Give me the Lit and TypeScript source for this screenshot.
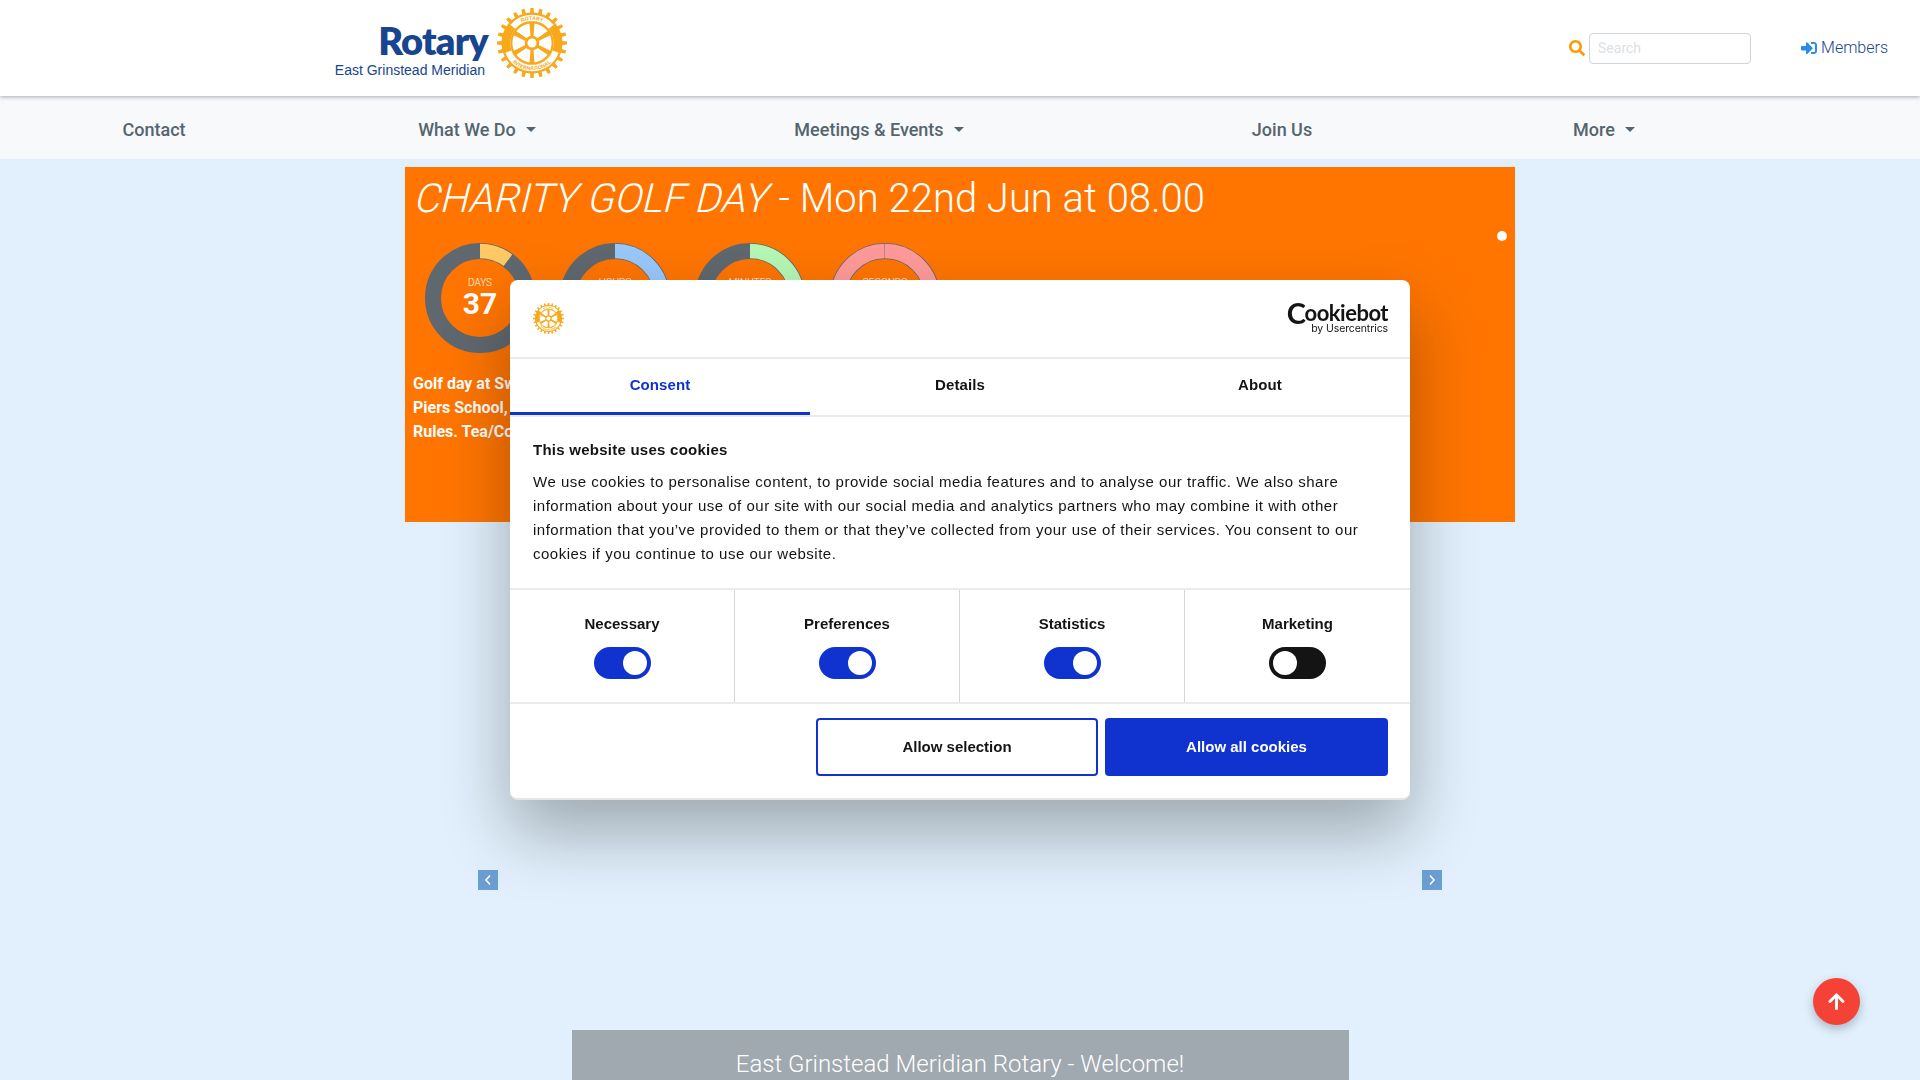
import { LitElement, html, css, svg } from "lit";
import { customElement } from "lit/decorators.js";

const GOLD = "#f7a81b";

function arcPath(r: number, fromDeg: number, toDeg: number, sweep: number) {
  const p = (d: number) => {
    const a = ((d - 90) * Math.PI) / 180;
    return `${(r * Math.cos(a)).toFixed(2)} ${(r * Math.sin(a)).toFixed(2)}`;
  };
  return `M ${p(fromDeg)} A ${r} ${r} 0 ${Math.abs(toDeg - fromDeg) > 180 ? 1 : 0} ${sweep} ${p(toDeg)}`;
}

function gearPoints() {
  const pts: string[] = [];
  const n = 24;
  for (let i = 0; i < n; i++) {
    const step = 360 / n;
    const base = i * step;
    const seq: [number, number][] = [
      [base - step * 0.5, 43.5],
      [base - step * 0.24, 43.5],
      [base - step * 0.17, 50],
      [base + step * 0.17, 50],
      [base + step * 0.24, 43.5],
    ];
    for (const [d, r] of seq) {
      const a = (d * Math.PI) / 180;
      pts.push(`${(r * Math.cos(a)).toFixed(2)},${(r * Math.sin(a)).toFixed(2)}`);
    }
  }
  return pts.join(" ");
}

function wheel(size: number, id: string) {
  const spokes = [0, 60, 120, 180, 240, 300];
  return html`<svg class="wheel" width=${size} height=${size} viewBox="-50 -50 100 100">
    <polygon points=${gearPoints()} fill=${GOLD}></polygon>
    <path d=${arcPath(36, -50, 50, 1)} fill="none" stroke="#fff" stroke-width="9"></path>
    <path d=${arcPath(36, 110, 250, 1)} fill="none" stroke="#fff" stroke-width="9"></path>
    <circle r="31" fill="#fff"></circle>
    <circle r="29.5" fill="none" stroke=${GOLD} stroke-width="3"></circle>
    ${spokes.map(
      (d) => svg`<polygon points="-2,-8 2,-8 3.6,-29 -3.6,-29" fill=${GOLD} transform="rotate(${d})"></polygon>`
    )}
    <circle r="10.5" fill=${GOLD}></circle>
    <circle r="6.5" fill="#fff"></circle>
    <path id="${id}-top" d=${arcPath(33.2, -50, 50, 1)} fill="none"></path>
    <path id="${id}-bot" d=${arcPath(39, 250, 110, 0)} fill="none"></path>
    <text class="wheel-text" fill=${GOLD} text-anchor="middle">
      <textPath href="#${id}-top" startOffset="50%">ROTARY</textPath>
    </text>
    <text class="wheel-text" fill=${GOLD} text-anchor="middle">
      <textPath href="#${id}-bot" startOffset="50%">INTERNATIONAL</textPath>
    </text>
  </svg>`;
}

const RINGS = [
  { label: "DAYS", value: "37", color: "#ffc966", frac: 37 / 365 },
  { label: "HOURS", value: "", color: "#99c8fb", frac: 0.36 },
  { label: "MINUTES", value: "", color: "#b5f7b5", frac: 0.36 },
  { label: "SECONDS", value: "", color: "#ff9a9a", frac: 0.997 },
];

const NAV = [
  { label: "Contact", caret: false },
  { label: "What We Do", caret: true },
  { label: "Meetings & Events", caret: true },
  { label: "Join Us", caret: false },
  { label: "More", caret: true },
];

const TOGGLES = [
  { label: "Necessary", on: true },
  { label: "Preferences", on: true },
  { label: "Statistics", on: true },
  { label: "Marketing", on: false },
];

@customElement("app-root")
export class AppRoot extends LitElement {
  static styles = css`
    :host {
      display: block;
      height: 1080px;
      overflow: hidden;
      background: #e1f0fc;
      font-family: Roboto, sans-serif;
      position: relative;
    }
    * { box-sizing: border-box; }
    .wheel-text { font: 700 7.5px "Liberation Sans", sans-serif; }
    .header {
      height: 96px;
      background: #fff;
      display: flex;
      align-items: flex-start;
      padding: 0 32px 0 335px;
      box-shadow: 0 1px 4px rgba(60, 80, 100, 0.45);
      position: relative;
    }
    .logo { display: flex; align-items: flex-start; gap: 9px; padding-top: 8px; }
    .logo-text { display: flex; flex-direction: column; align-items: flex-end; width: 153px; }
    .logo-rotary {
      font: 800 38px/44px Lato, sans-serif;
      letter-spacing: -0.8px;
      color: #17458f;
      margin-top: 10px;
    }
    .logo-sub {
      font: 14px/16px "Liberation Sans", sans-serif;
      color: #17458f;
      white-space: nowrap;
      padding-right: 3px;
    }
    .tools { margin-left: auto; display: flex; align-items: center; height: 96px; }
    .search-icon { width: 16px; height: 16px; fill: #ff9900; margin-right: 4px; display: block; }
    .search {
      width: 162px;
      height: 31px;
      border: 1px solid #ced4da;
      border-radius: 4px;
      padding: 0 8px;
      font: 14px Roboto, sans-serif;
      color: #dcdfe3;
      display: flex;
      align-items: center;
    }
    .members {
      margin-left: 50px;
      display: flex;
      align-items: center;
      gap: 4px;
      font: 300 16px Roboto, sans-serif;
      color: #17458f;
      margin-top: -1px;
    }
    .members svg { width: 16px; height: 16px; fill: #2a8ee8; display: block; }
    .nav {
      height: 63px;
      background: #f8f9fa;
      display: grid;
      grid-template-columns: 308px 338px 466px 340px 304px;
      align-items: center;
      padding-top: 4px;
    }
    .nav-item {
      text-align: center;
      font: 500 18px Roboto, sans-serif;
      color: #54656f;
      white-space: nowrap;
    }
    .caret {
      display: inline-block;
      margin-left: 10px;
      vertical-align: 4px;
      border-top: 5px solid #54656f;
      border-left: 5px solid transparent;
      border-right: 5px solid transparent;
    }
    .carousel {
      position: relative;
      height: 863px;
      margin-top: 8px;
    }
    .banner {
      width: 1110px;
      height: 355px;
      margin: 0 auto;
      background: #ff7500;
      color: #fff;
      position: relative;
      overflow: hidden;
    }
    .title {
      font: 300 40px/48px Roboto, sans-serif;
      padding: 8px 0 0 10px;
      white-space: nowrap;
    }
    .slant {
      display: inline-block;
      font-weight: 300;
      transform: skewX(-14deg);
      transform-origin: 0 60%;
    }
    .rings { display: flex; gap: 25px; padding: 20px 0 0 20px; }
    .ring { width: 110px; height: 110px; display: grid; place-items: center; }
    .ring > * { grid-area: 1 / 1; }
    .ring-svg { display: block; }
    .ring-text { display: flex; flex-direction: column; align-items: center; margin-top: 1px; }
    .ring-label { font: 300 10px/12px Roboto, sans-serif; }
    .ring-value { font: 700 30px/30px Roboto, sans-serif; min-height: 32px; }
    .desc {
      font: 700 16px/24px Roboto, sans-serif;
      padding: 19px 0 0 8px;
    }
    .dot {
      position: absolute;
      top: 64px;
      left: 1092px;
      width: 10px;
      height: 10px;
      border-radius: 50%;
      background: #fff;
    }
    .arrow {
      position: absolute;
      top: 703px;
      width: 20px;
      height: 20px;
      background: #6b9fd4;
      display: flex;
      align-items: center;
      justify-content: center;
    }
    .arrow svg { width: 8px; height: 12px; display: block; }
    .arrow.prev { left: 478px; }
    .arrow.next { left: 1422px; }
    .welcome {
      width: 777px;
      margin: 0 auto;
      background: #9fa9af;
      color: #fff;
      text-align: center;
      font: 300 24px/28px Roboto, sans-serif;
      padding: 20px 0 20px;
    }
    .fab {
      position: fixed;
      left: 1813px;
      top: 978px;
      width: 47px;
      height: 47px;
      border-radius: 50%;
      background: #f44336;
      box-shadow: 0 4px 10px rgba(60, 80, 100, 0.35);
      display: flex;
      align-items: center;
      justify-content: center;
    }
    .fab svg { width: 17px; height: 19px; fill: #fff; display: block; }

    .dialog {
      position: fixed;
      left: 510px;
      top: 280px;
      width: 900px;
      height: 520px;
      background: #fff;
      border-radius: 8px;
      border-bottom: 2px solid #e6e6e6;
      box-shadow: 0 32px 68px rgba(0, 0, 0, 0.3);
      font-family: "Liberation Sans", Arial, sans-serif;
      color: #141414;
      display: flex;
      flex-direction: column;
      overflow: hidden;
    }
    .d-head {
      height: 79px;
      flex: none;
      border-bottom: 2px solid #ebebeb;
      display: flex;
      align-items: center;
      justify-content: space-between;
      padding: 0 22px 0 23px;
    }
    .d-logo { display: block; margin-top: 4px; }
    .cb { display: flex; flex-direction: column; align-items: flex-end; color: #141414; margin-bottom: 1px; }
    .cb-name {
      font: 700 22px/21px Lato, sans-serif;
      letter-spacing: -0.5px;
      display: flex;
      align-items: center;
    }
    .cb-c { font-size: 29px; font-weight: 700; line-height: 21px; margin-right: -1px; }
    .cb-by {
      font: 400 10.5px/12px Inter, sans-serif;
      letter-spacing: -0.1px;
    }
    .tabs { display: grid; grid-template-columns: repeat(3, 1fr); border-bottom: 2px solid #ebebeb; flex: none; height: 58px; }
    .tab {
      display: flex;
      align-items: center;
      justify-content: center;
      font-weight: 700;
      font-size: 15px;
      letter-spacing: 0.1px;
      border-bottom: 3px solid transparent;
      padding-bottom: 2px;
    }
    .tab.active { color: #1032cf; border-bottom-color: #1032cf; }
    .body {
      height: 173px;
      flex: none;
      padding: 21px 23px 0;
      border-bottom: 2px solid #ebebeb;
      font-size: 15px;
      line-height: 24px;
      letter-spacing: 0.5px;
    }
    .body h2 { font-size: 15px; line-height: 24px; margin: 0 0 8px; font-weight: 700; letter-spacing: 0.25px; }
    .body p { margin: 0; }
    .toggles { display: grid; grid-template-columns: repeat(4, 1fr); height: 114px; flex: none; border-bottom: 2px solid #ebebeb; }
    .tg {
      display: flex;
      flex-direction: column;
      align-items: center;
      padding-top: 23px;
      gap: 12px;
      font-weight: 700;
      font-size: 15px;
      line-height: 22px;
      border-right: 1px solid #d6d6d6;
    }
    .tg:last-child { border-right: none; }
    .switch {
      width: 57px;
      height: 32px;
      border-radius: 16px;
      background: #141414;
      padding: 4px;
      display: flex;
      justify-content: flex-start;
    }
    .switch.on { background: #1032cf; justify-content: flex-end; }
    .knob { width: 24px; height: 24px; border-radius: 50%; background: #fff; }
    .actions {
      flex: 1;
      display: flex;
      justify-content: flex-end;
      gap: 7px;
      padding: 14px 22px 0;
    }
    .btn {
      height: 58px;
      border: 2px solid #1032cf;
      border-radius: 4px;
      font-weight: 700;
      font-size: 15px;
      padding-bottom: 2px;
      display: flex;
      align-items: center;
      justify-content: center;
    }
    .btn.sel { width: 282px; color: #141414; background: #fff; }
    .btn.all { width: 283px; color: #fff; background: #1032cf; }
  `;

  render() {
    const C = 2 * Math.PI * 47;
    return html`
      <header class="header">
        <div class="logo">
          <div class="logo-text">
            <div class="logo-rotary">Rotary</div>
            <div class="logo-sub">East Grinstead Meridian</div>
          </div>
          ${wheel(70, "wa")}
        </div>
        <div class="tools">
          <svg class="search-icon" viewBox="0 0 512 512"><path d="M505 442.7L405.3 343c-4.5-4.5-10.6-7-17-7H372c27.6-35.3 44-79.7 44-128C416 93.1 322.9 0 208 0S0 93.1 0 208s93.1 208 208 208c48.3 0 92.7-16.4 128-44v16.3c0 6.4 2.5 12.5 7 17l99.7 99.7c9.4 9.4 24.6 9.4 33.9 0l28.3-28.3c9.4-9.4 9.4-24.6.1-34zM208 336c-70.7 0-128-57.2-128-128 0-70.7 57.2-128 128-128 70.7 0 128 57.2 128 128 0 70.7-57.2 128-128 128z"></path></svg>
          <div class="search">Search</div>
          <div class="members">
            <svg viewBox="0 0 512 512"><path d="M416 448h-84c-6.6 0-12-5.4-12-12v-40c0-6.6 5.4-12 12-12h84c17.7 0 32-14.3 32-32V160c0-17.7-14.3-32-32-32h-84c-6.6 0-12-5.4-12-12V76c0-6.6 5.4-12 12-12h84c53 0 96 43 96 96v192c0 53-43 96-96 96zm-47-201L201 79c-15-15-41-4.5-41 17v96H24c-13.3 0-24 10.7-24 24v96c0 13.3 10.7 24 24 24h136v96c0 21.5 26 32 41 17l168-168c9.3-9.4 9.3-24.6 0-34z"></path></svg>
            Members
          </div>
        </div>
      </header>
      <nav class="nav">
        ${NAV.map(
          (n) => html`<div class="nav-item">${n.label}${n.caret ? html`<span class="caret"></span>` : ""}</div>`
        )}
      </nav>
      <section class="carousel">
        <div class="banner">
          <div class="title"><span class="slant">CHARITY GOLF DAY</span> - Mon 22nd Jun at 08.00</div>
          <div class="rings">
            ${RINGS.map(
              (r) => html`<div class="ring">
                <svg class="ring-svg" width="110" height="110" viewBox="0 0 110 110">
                  <circle cx="55" cy="55" r="47" fill="none" stroke="#60686f" stroke-width="16"></circle>
                  <circle
                    cx="55"
                    cy="55"
                    r="47"
                    fill="none"
                    stroke=${r.color}
                    stroke-width="14.5"
                    stroke-dasharray="${r.frac * C} ${C}"
                    transform="rotate(-90 55 55)"
                  ></circle>
                </svg>
                <div class="ring-text">
                  <div class="ring-label">${r.label}</div>
                  <div class="ring-value">${r.value}</div>
                </div>
              </div>`
            )}
          </div>
          <div class="desc">Golf day at Swe<br />Piers School,<br />Rules. Tea/Co</div>
          <div class="dot"></div>
        </div>
        <div class="arrow prev">
          <svg viewBox="0 0 8 12"><path d="M6 1.5 L2 6 L6 10.5" fill="none" stroke="#fff" stroke-width="1.6"></path></svg>
        </div>
        <div class="arrow next">
          <svg viewBox="0 0 8 12"><path d="M2 1.5 L6 6 L2 10.5" fill="none" stroke="#fff" stroke-width="1.6"></path></svg>
        </div>
      </section>
      <div class="welcome">East Grinstead Meridian Rotary - Welcome!</div>
      <div class="fab">
        <svg viewBox="0 0 448 512"><path d="M34.9 289.5l-22.2-22.2c-9.4-9.4-9.4-24.6 0-33.9L207 39c9.4-9.4 24.6-9.4 33.9 0l194.3 194.3c9.4 9.4 9.4 24.6 0 33.9L413 289.4c-9.5 9.5-25 9.3-34.3-.4L264 168.6V456c0 13.3-10.7 24-24 24h-32c-13.3 0-24-10.7-24-24V168.6L69.2 289.1c-9.3 9.8-24.8 10-34.3.4z"></path></svg>
      </div>
      <div class="dialog">
        <div class="d-head">
          <div class="d-logo">${wheel(31, "wb")}</div>
          <div class="cb">
            <div class="cb-name"><span class="cb-c">C</span>ookiebot</div>
            <div class="cb-by">by Usercentrics</div>
          </div>
        </div>
        <div class="tabs">
          <div class="tab active">Consent</div>
          <div class="tab">Details</div>
          <div class="tab">About</div>
        </div>
        <div class="body">
          <h2>This website uses cookies</h2>
          <p>We use cookies to personalise content, to provide social media features and to analyse our traffic. We also share information about your use of our site with our social media and analytics partners who may combine it with other information that you’ve provided to them or that they’ve collected from your use of their services. You consent to our cookies if you continue to use our website.</p>
        </div>
        <div class="toggles">
          ${TOGGLES.map(
            (t) => html`<div class="tg">
              ${t.label}
              <div class="switch ${t.on ? "on" : ""}"><div class="knob"></div></div>
            </div>`
          )}
        </div>
        <div class="actions">
          <div class="btn sel">Allow selection</div>
          <div class="btn all">Allow all cookies</div>
        </div>
      </div>
    `;
  }
}
